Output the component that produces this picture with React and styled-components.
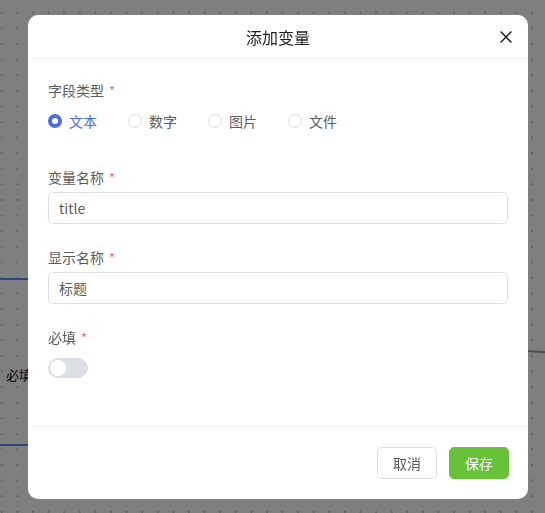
import React, { useState } from 'react';
import styled, { createGlobalStyle } from 'styled-components';

const GlobalStyle = createGlobalStyle`
  html, body {
    margin: 0;
    padding: 0;
    width: 100%;
    height: 100%;
    overflow: hidden;
  }
  body {
    font-family: "Noto Sans CJK SC", "Liberation Sans", sans-serif;
  }
  * { box-sizing: border-box; }
`;

// canvas behind the dialog
const Canvas = styled.div`
  position: relative;
  width: 100vw;
  height: 100vh;
  background-color: #ffffff;
  background-image: radial-gradient(circle, #c4c4c4 0.8px, transparent 1px);
  background-size: 15.6px 15.6px;
  background-position: -6px 5px;
  overflow: hidden;
`;

const Edge = styled.div`
  position: absolute;
  left: ${(p) => p.x}px;
  top: ${(p) => p.y}px;
  width: ${(p) => p.w}px;
  height: 2px;
  background: ${(p) => p.color};
  transform: rotate(${(p) => p.angle || 0}deg);
  transform-origin: left center;
`;

const NodeLabel = styled.span`
  position: absolute;
  left: 6px;
  top: 365px;
  font-size: 13px;
  color: #000;
`;

const Overlay = styled.div`
  position: fixed;
  inset: 0;
  background: rgba(0, 0, 0, 0.5);
  display: flex;
  align-items: flex-start;
  padding: 15px 0 0 28px;
`;

const Dialog = styled.div`
  width: 500px;
  height: 484px;
  background: #fff;
  border-radius: 10px;
  display: flex;
  flex-direction: column;
  overflow: hidden;
`;

const Header = styled.div`
  position: relative;
  height: 44px;
  flex: none;
  display: flex;
  align-items: center;
  justify-content: center;
  border-bottom: 1px solid #eef0f7;
`;

const Title = styled.h3`
  margin: 0;
  font-size: 16px;
  font-weight: 400;
  color: #1f1f1f;
`;

const CloseButton = styled.button`
  position: absolute;
  right: 14px;
  top: 14px;
  width: 16px;
  height: 16px;
  padding: 0;
  border: none;
  background: transparent;
  display: flex;
  align-items: center;
  justify-content: center;
  cursor: pointer;
`;

const Body = styled.div`
  flex: 1;
  padding: 21px 20px 0 20px;
`;

const Field = styled.div`
  margin-bottom: ${(p) => p.gap}px;
`;

const Label = styled.div`
  height: 20px;
  font-size: 14px;
  line-height: 20px;
  color: #5c5c5c;
  margin-bottom: 5px;
`;

const Star = styled.span`
  color: #f56c6c;
  margin-left: 5px;
  font-size: 13px;
  line-height: 0;
`;

const RadioGroup = styled.div`
  display: flex;
  height: 32px;
  align-items: center;
`;

const RadioItem = styled.label`
  display: flex;
  align-items: center;
  width: 80px;
  gap: 7px;
  font-size: 14px;
  color: ${(p) => (p.checked ? '#4a6ee0' : '#5c5c5c')};
  cursor: pointer;
`;

const RadioDot = styled.span`
  width: 14px;
  height: 14px;
  border-radius: 50%;
  flex: none;
  border: ${(p) => (p.checked ? '4px solid #4a6ee0' : '1px solid #dcdfe6')};
  background: #fff;
`;

const Input = styled.input`
  display: block;
  width: 100%;
  height: 32px;
  border: 1px solid #dcdfe6;
  border-radius: 5px;
  padding: 0 10px;
  font-family: "Noto Sans CJK SC", "Liberation Sans", sans-serif;
  font-size: 14px;
  color: #5c5c5c;
  outline: none;
`;

const Switch = styled.button`
  margin-top: 11px;
  width: 40px;
  height: 20px;
  border-radius: 10px;
  border: none;
  padding: 2px;
  background: ${(p) => (p.on ? '#4a6ee0' : '#dcdfe6')};
  display: flex;
  justify-content: ${(p) => (p.on ? 'flex-end' : 'flex-start')};
  cursor: pointer;
`;

const Knob = styled.span`
  width: 16px;
  height: 16px;
  border-radius: 50%;
  background: #fff;
`;

const Footer = styled.div`
  flex: none;
  height: 73px;
  border-top: 1px solid #eef0f7;
  display: flex;
  justify-content: flex-end;
  align-items: center;
  gap: 12px;
  padding: 0 19px 0 0;
`;

const Button = styled.button`
  height: 32px;
  padding: 0 15px;
  border-radius: 5px;
  font-family: "Noto Sans CJK SC", "Liberation Sans", sans-serif;
  font-size: 14px;
  cursor: pointer;
  border: 1px solid ${(p) => (p.primary ? '#67c23a' : '#dcdfe6')};
  background: ${(p) => (p.primary ? '#67c23a' : '#fff')};
  color: ${(p) => (p.primary ? '#fff' : '#5c5c5c')};
`;

const types = ['文本', '数字', '图片', '文件'];

export default function App() {
  const [type, setType] = useState('文本');
  const [name, setName] = useState('title');
  const [display, setDisplay] = useState('标题');
  const [required, setRequired] = useState(false);

  return (
    <>
      <GlobalStyle />
      <Canvas>
        <Edge x={0} y={278} w={40} color="#5b8ff9" />
        <Edge x={0} y={444} w={40} color="#5b8ff9" />
        <Edge x={500} y={348} w={60} angle={4} color="#9a9a9a" />
        <NodeLabel>必填</NodeLabel>
      </Canvas>
      <Overlay>
        <Dialog>
          <Header>
            <Title>添加变量</Title>
            <CloseButton aria-label="close">
              <svg width="12" height="12" viewBox="0 0 12 12">
                <path d="M0.6 0.6 L11.4 11.4 M11.4 0.6 L0.6 11.4" stroke="#1a1a1a" strokeWidth="1.4" fill="none" />
              </svg>
            </CloseButton>
          </Header>
          <Body>
            <Field gap={30}>
              <Label>字段类型<Star>*</Star></Label>
              <RadioGroup>
                {types.map((t) => (
                  <RadioItem key={t} checked={type === t} onClick={() => setType(t)}>
                    <RadioDot checked={type === t} />
                    {t}
                  </RadioItem>
                ))}
              </RadioGroup>
            </Field>
            <Field gap={23}>
              <Label>变量名称<Star>*</Star></Label>
              <Input value={name} onChange={(e) => setName(e.target.value)} />
            </Field>
            <Field gap={23}>
              <Label>显示名称<Star>*</Star></Label>
              <Input value={display} onChange={(e) => setDisplay(e.target.value)} />
            </Field>
            <Field gap={0}>
              <Label>必填<Star>*</Star></Label>
              <Switch on={required} onClick={() => setRequired(!required)}>
                <Knob />
              </Switch>
            </Field>
          </Body>
          <Footer>
            <Button>取消</Button>
            <Button primary>保存</Button>
          </Footer>
        </Dialog>
      </Overlay>
    </>
  );
}
